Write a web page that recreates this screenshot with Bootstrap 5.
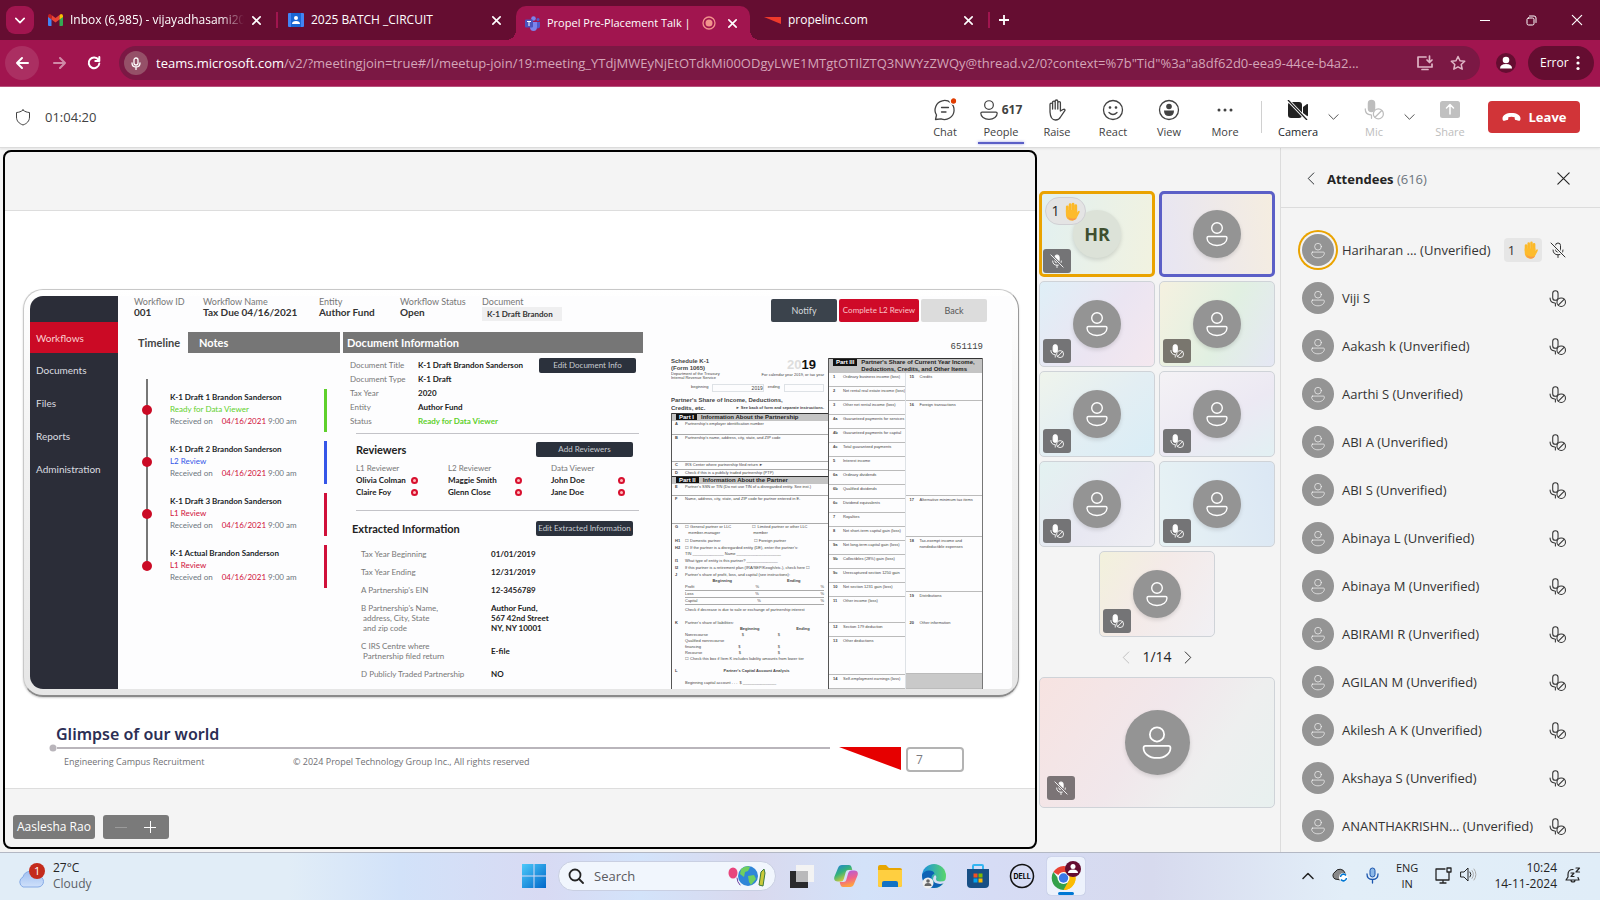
<!DOCTYPE html>
<html lang="en">
<head>
<meta charset="utf-8">
<meta name="viewport" content="width=device-width, initial-scale=1">
<title>Propel Pre-Placement Talk</title>
<link href="https://cdn.jsdelivr.net/npm/bootstrap@5.3.0/dist/css/bootstrap.min.css" rel="stylesheet">
<style>
:root{--ui:"Open Sans","Noto Sans",sans-serif;--slide:Lato,"Open Sans",sans-serif}
body{font-family:var(--ui);font-size:13px;line-height:20px;color:#242424;background:#f4f4f4}
button,input{font-family:inherit}
button{background:none;border:0;padding:0;color:inherit}
a{color:inherit;text-decoration:none}
svg{display:block;flex:none}
.ln{fill:none;stroke:currentColor;stroke-linecap:round;stroke-linejoin:round}
/* browser */
.tabstrip{background:#650d31;height:40px;color:#fff;padding-left:6px}
.tabsearch{width:28px;height:28px;border-radius:9px;background:#a1154f}
.btab{width:238px;height:34px;padding:0 14px 0 10px;gap:7px}
.btab .ttl{font-size:12px;white-space:nowrap;overflow:hidden}
.btab .fade-end{-webkit-mask-image:linear-gradient(90deg,#000 86%,transparent)}
.btab.on{width:234px;background:#a1154f;border-radius:10px 10px 0 0;padding:0 12px 0 9px;gap:7px;position:relative}
.btab.on .ttl{font-size:11px}
.btab.on::before,.btab.on::after{content:"";position:absolute;bottom:0;width:10px;height:10px}
.btab.on::before{left:-10px;background:radial-gradient(circle at 0 0,transparent 10px,#a1154f 10px)}
.btab.on::after{right:-10px;background:radial-gradient(circle at 100% 0,transparent 10px,#a1154f 10px)}
.tsep{width:2px;height:16px;background:#a1154f}
.wbtn{width:46px;height:40px}
.addr{background:#a1154f;height:47px;padding:0 6px 0 5px;border-bottom:1px solid #b8527c;color:#fff}
.rbtn{width:34px;height:34px;border-radius:50%}
.rbtn.hov{background:#ab2f62}
.omni{height:34px;border-radius:17px;background:#7b1844;padding:0 14px 0 5px}
.omni .mic{width:24px;height:24px;border-radius:50%;background:#955068}
.omni .tint{color:#dfb5c5}
.omni .url{font-size:13px;white-space:nowrap;overflow:hidden;text-overflow:ellipsis;color:#d4a5b8}
.omni .url b{font-weight:400;color:#fff}
.errpill{height:34px;border-radius:17px;background:#650d31;font-size:12px;padding:0 2px 0 12px;width:66px}
/* meeting bar */
.mbar{height:61px;background:#fff;border-bottom:1px solid #dcdcdc;box-shadow:0 1px 2px #0001;padding:0 20px 0 15px;color:#424242;position:relative}
.mbar .timer{margin-left:14px}
.tool{width:56px;height:60px;font-size:11px;line-height:14px;padding-top:10px;gap:3px;position:relative}
.tool .ic{height:25px}
.tool.sel::after{content:"";position:absolute;left:5px;right:5px;bottom:3px;height:2px;background:#5b5fc7;box-shadow:0 0 3px #5b5fc7aa}
.opts{padding:0 7px 0 2px}
.dim{color:#bdbdbd}
.leave{width:92px;height:32px;background:#d13438;border-radius:4px;color:#fff;font-weight:700;font-size:13px;margin-left:10px}
/* stage */
.stage{border:2px solid #000;border-radius:8px;margin:2px 2px 3px 3px;background:#f4f4f4;overflow:hidden;position:relative;min-width:0}
.pslide{background:#fff;border:solid #ddd;border-width:1px 0;height:579px;padding:78px 16px 0 18px;font-family:var(--slide)}
.device{height:408px;border-radius:20px;padding:6px;background:linear-gradient(#fff,#f2f2f2 40%,#e6e6e6);border:1px solid #c8c8c8;border-bottom:2px solid #8a8a8a;border-right-color:#999;box-shadow:0 1px 2px #0003}
.screen{border-radius:13px 4px 4px 13px;overflow:hidden;background:#fdfdfe;font-size:8px;line-height:12px;color:#222;height:100%;white-space:nowrap}
.side{width:88px;background:#2b2d38;color:#dcdde0;padding-top:26px;font-size:10px}
.side a{height:33px;padding-left:6px;display:flex;align-items:center}
.side a.cur{background:#cb0a25;color:#fbd0d0;height:31px}
.hd{height:36px;padding:0 25px 0 16px;color:#777;font-size:9px;line-height:11px}
.hd b{color:#333;font-size:10px;display:block;line-height:11px}
.hd .pick{font-size:8px;line-height:14px;width:80px;background:#efeff0;padding-left:5px}
.sbtn{background:#2b313c;color:#c9ccd2;border-radius:2px;font-size:8px;line-height:15px;height:15px;width:97px;text-align:center}
.hbtn{height:23px;width:66px;font-size:9px;border-radius:2px;text-align:center}
.gbar{background:#767676;color:#fff;height:21px;line-height:21px;font-weight:700;font-size:11px}
.tl{position:relative;padding:36px 0 0 36px}
.tl::before{content:"";position:absolute;left:12px;top:26px;height:188px;width:2px;background:#777}
.tl li{height:43px;margin-bottom:9px;width:157px;border-right:3px solid;padding-top:2px;position:relative;line-height:12px}
.tl li::before{content:"";position:absolute;left:-28px;top:16px;width:10px;height:10px;border-radius:50%;background:#cb0a25;border:0}
.tl li .when{margin-left:7px}
.g{color:#5fd02c}.bl{color:#3556e8}.r{color:#d0103a}
.info{display:grid;grid-template-columns:68px 1fr;margin:0;line-height:14px;color:#777}
.info dt{font-weight:400}.info dd{margin:0;font-weight:700;color:#222}
.info dd.g{color:#5fd02c}
.ext{grid-template-columns:130px 1fr;line-height:10px;row-gap:8px}
.sec{font-size:11px;line-height:15px;font-weight:700}
.rev{width:273px;table-layout:fixed;line-height:12px}
.rev th{font-weight:400;color:#777;padding:0}.rev td{padding:0;font-weight:700}
.xdot{display:block;width:7px;height:7px;border-radius:50%;border:2px solid #d8102f;background:#fbb}
.rule{height:1px;background:#c3c3c8}
/* tax form */
.k1{font-family:"Liberation Sans",sans-serif;font-size:4px;line-height:6px;color:#444;white-space:nowrap}
.k1 .left{width:158px;border-right:1px solid #555;overflow:hidden}
.k1 .left>*{flex-shrink:0}
.k1 .ln2{border-bottom:1px solid #aaa}
.k1 .part{background:#c4c4c4;border-top:1px solid #333;font-weight:700;font-size:6px;line-height:7px;color:#222}
.k1 .part span{background:#111;color:#fff;padding:0 3px;margin:0 4px 0 4px}
.k1 .q{padding-left:13px;position:relative;overflow:hidden}
.k1 .q i{position:absolute;left:3px;font-style:normal;font-weight:700}
.k1 .cell{border-bottom:1px solid #bbb;padding:1px 0 0 14px;flex:1 1 0;position:relative;overflow:hidden;min-height:0}
.k1 .cell i{position:absolute;left:4px;font-style:normal;font-weight:700}
.k1 .x2{flex-grow:2}.k1 .x3{flex-grow:3}.k1 .x4{flex-grow:4}.k1 .x7{flex-grow:7}
.foot{font-size:9px;color:#7b7b7f;font-family:"Open Sans",sans-serif;padding:27px 55px 0 29px}
.foot h1{font:600 16px/20px "Noto Sans",sans-serif;color:#2c2f55;margin:0}
.track{height:2px;background:#b9b5bb;width:773px}
.pageno{width:58px;height:25px;border:2px solid #b3b3b3;border-radius:4px;padding-left:8px;font-size:12px;line-height:21px}
.mt3{margin-top:3px}
.over{position:absolute;left:8px;bottom:8px}
.chip{background:#7a7a7a;color:#fff;border-radius:3px;height:24px;line-height:24px;font-size:12px}
/* gallery */
.gal{width:241px;padding:43px 5px 0 0;flex:none}
.pager{height:40px;font-size:14px;gap:12px}
.tile{width:116px;height:86px;border:1px solid #cfd3d8;border-radius:5px;position:relative}
.tile.hand{border:3px solid #eaa300}.tile.spk{border:3px solid #5b5fc7}
.ava{border-radius:50%;background:#949494;color:#fff;display:flex;align-items:center;justify-content:center;flex:none}
.tile .ava{width:48px;height:48px;box-shadow:0 2px 4px #0002}
.mute{position:absolute;left:3px;bottom:3px;width:28px;height:24px;background:#747476;color:#fff;border-radius:3px;display:flex;align-items:center;justify-content:center}
.tile.hand .mute{left:1px;bottom:1px}
.tile.me{width:236px;height:131px}.me .mute{left:7px;bottom:7px}.tile.me .ava{width:65px;height:65px}
.raised{position:absolute;left:3px;top:3px;width:41px;height:28px;border-radius:14px;background:#e4e4e4;border:1px solid #d0d0d4;font-size:14px}
/* attendees */
.panel{width:320px;border-left:1px solid #dcdcdc;flex:none}
.phead{height:60px;border-bottom:1px solid #dcdcdc;padding:2px 28px 0 26px}
.att{height:48px;padding:0 34px 0 21px;font-size:13px;gap:8px;color:#333}
.att .ava{width:32px;height:32px}
.att .ava.ring{box-shadow:0 0 0 2px #f4f4f4,0 0 0 4px #eaa300}
.cnt{background:#e6e6e6;border-radius:4px;height:24px;width:38px}
/* taskbar */
.tbar{height:48px;border-top:1px solid #b3b8c4;display:grid;grid-template-columns:1fr auto 1fr;align-items:center;background:linear-gradient(90deg,#e1edf7 0,#e1edf7 18%,#d2e2f9 25%,#d8daf3 34%,#d3e3fa 40%,#d9d9ee 47%,#d3e2f9 54%,#d6dcf5 62%,#d7daee 72%,#e2eef8 84%,#e0edf8)}
.tbar>*{margin-bottom:2px}
.srch{width:218px;height:30px;border-radius:15px;background:#f1f6fd;border:1px solid #c9cfe2;padding:0 9px;margin:0 4px 0 2px}
.srch input{border:0;background:none;outline:0;width:96px;font-size:13px;color:#555}
.srch input::placeholder{color:#5a5a5f;opacity:1}
.app{width:38px;height:38px;border-radius:4px;margin:0 3px;display:flex;align-items:center;justify-content:center;position:relative}
.app.act{background:#edf2fc;box-shadow:0 0 1px #8899bb}
.app.act::after{content:"";position:absolute;bottom:0;width:16px;height:3px;border-radius:2px;background:#0078d4}
.sm{font-size:11px;line-height:16px}
.md{font-size:12px;line-height:16px}
.tray{padding-right:19px;gap:17px}
</style>
</head>
<body>
<svg width="0" height="0" class="position-absolute" aria-hidden="true">
<symbol id="x" viewBox="0 0 12 12"><path class="ln" d="M2 2l8 8M10 2l-8 8"/></symbol>
<symbol id="person" viewBox="0 0 22 26"><g class="ln"><circle cx="11" cy="7" r="5.300"/><path d="M2.500 15.500h17q1.500 0 1.500 1.500c0 4-4 7.500-10 7.500S1 21 1 17q0-1.500 1.500-1.500z"/></g></symbol>
<symbol id="micoff" viewBox="0 0 16 16"><rect x="5.500" y="1" width="5" height="9" rx="2.500" fill="currentColor" fill-opacity="var(--f,1)" stroke="currentColor"/><path class="ln" d="M3 8c0 3 2 4.800 5 4.800S13 11 13 8M8 13v2.500"/><path d="M1 1l14 14" stroke="var(--bg,#747476)" stroke-width="3"/><path class="ln" d="M1 1l14 14"/></symbol>
<symbol id="micno" viewBox="0 0 16 16"><rect x="3.500" y="0.700" width="5" height="9" rx="2.500" fill="currentColor" fill-opacity="var(--f,1)" stroke="currentColor"/><path class="ln" d="M1 7.500c0 2.500 1.500 4.500 4.500 4.800M6 12.500v2.500"/><circle cx="11.500" cy="11.500" r="4" fill="var(--bg,#747476)" stroke="currentColor"/><path class="ln" d="M8.800 14.200l5.400-5.400"/></symbol>
<symbol id="palm" viewBox="0 0 20 24"><g fill="none" stroke="#fcb928" stroke-linecap="round" stroke-width="3.400"><path d="M4 13V6M7.600 12V3.200M11.300 12V2.500M14.800 12V4.500"/></g><path d="M2.300 10H16.500v3.500c1-1.800 2-2.800 2.900-2.200.7.500.3 1.600-.2 2.700L16 20c-1.200 2.300-3 3.500-6 3.500-4.500 0-7.700-3-7.700-8z" fill="#fdbb2c"/><path d="M4 18c1 3 3.500 5.500 7 5.300 2.500-.2 4-1.300 5-3.300-2 1.500-8 2-12-2z" fill="#f8984a"/></symbol>
<symbol id="down" viewBox="0 0 12 8"><path class="ln" d="M1 1.500l5 5 5-5"/></symbol>
<symbol id="left" viewBox="0 0 8 14"><path class="ln" d="M7 1L1 7l6 6"/></symbol>
</svg>

<div class="d-flex flex-column vh-100 overflow-hidden">
<header>
  <nav class="tabstrip d-flex align-items-center" aria-label="Tabs">
    <button class="tabsearch d-flex align-items-center justify-content-center" aria-label="Search tabs"><svg width="10" height="7" stroke-width="2"><use href="#down"/></svg></button>
    <div class="btab d-flex align-items-center ms-1"><svg width="15" height="12" viewBox="0 0 15 12"><path d="M0 2v9q0 1 1 1h2.500V4z" fill="#4285f4"/><path d="M15 2v9q0 1-1 1h-2.500V4z" fill="#34a853"/><path d="M3.500 1L7.500 4l4-3v4.500L7.500 8.500l-4-3z" fill="#ea4335"/><path d="M0 2Q0 0 2 0l1.500 1v4.500L0 3z" fill="#c5221f"/><path d="M15 2q0-2-2-2l-1.500 1v4.500L15 3z" fill="#fbbc04"/></svg><span class="ttl fade-end flex-grow-1">Inbox (6,985) - vijayadhasami20</span><button aria-label="Close tab"><svg width="11" height="11" stroke-width="1.800"><use href="#x"/></svg></button></div>
    <span class="tsep"></span>
    <div class="btab d-flex align-items-center"><svg width="16" height="14" viewBox="0 0 16 14"><rect width="16" height="14" rx="1" fill="#4285f4"/><rect x="3" width="10" height="14" fill="#1a66d2"/><circle cx="8" cy="5" r="2" fill="#fff"/><path d="M4 11q0-3 4-3t4 3z" fill="#fff"/></svg><span class="ttl flex-grow-1">2025 BATCH _CIRCUIT</span><button aria-label="Close tab"><svg width="11" height="11" stroke-width="1.800"><use href="#x"/></svg></button></div>
    <div class="btab on d-flex align-items-center align-self-end"><svg width="15" height="15" viewBox="0 0 15 15"><circle cx="8.500" cy="2.500" r="2.300" fill="#7b83eb"/><circle cx="13" cy="3.500" r="1.500" fill="#5059c9"/><path d="M11 6h4v4q0 2.500-3 2.500z" fill="#5059c9"/><path d="M5 6h7v5q0 4-3.500 4T5 11z" fill="#7b83eb"/><rect y="3.500" width="8" height="8" rx="1" fill="#4b53bc"/><path d="M2 5.500h4M4 5.500V10" stroke="#fff"/></svg><span class="ttl flex-grow-1">Propel Pre-Placement Talk |</span><svg width="14" height="14" viewBox="0 0 14 14"><circle cx="7" cy="7" r="6" fill="none" stroke="#f2938c" stroke-width="1.300"/><circle cx="7" cy="7" r="3.500" fill="#f2938c"/></svg><button class="ms-1" aria-label="Close tab"><svg width="11" height="11" stroke-width="1.800"><use href="#x"/></svg></button></div>
    <div class="btab d-flex align-items-center"><svg class="ms-1" width="17" height="7" viewBox="0 0 17 7"><path d="M0 0h17v7z" fill="#ee3a2b"/></svg><span class="ttl flex-grow-1">propelinc.com</span><button aria-label="Close tab"><svg width="11" height="11" stroke-width="1.800"><use href="#x"/></svg></button></div>
    <span class="tsep"></span>
    <button class="ms-1 p-1" aria-label="New tab"><svg width="12" height="12" viewBox="0 0 12 12" stroke="#fff" stroke-width="1.800"><path d="M6 1v10M1 6h10"/></svg></button>
    <div class="ms-auto d-flex">
      <button class="wbtn d-grid" aria-label="Minimize"><svg class="m-auto" width="10" height="10" stroke="#fff"><path d="M0 5.500h10"/></svg></button>
      <button class="wbtn d-grid" aria-label="Restore"><svg class="m-auto ln" width="11" height="11"><rect x="1" y="3" width="7" height="7" rx="1.500"/><path d="M3.500 1H8q2 0 2 2v4.500"/></svg></button>
      <button class="wbtn d-grid" aria-label="Close"><svg class="m-auto" width="14" height="14"><use href="#x"/></svg></button>
    </div>
  </nav>
  <div class="addr d-flex align-items-center">
    <button class="rbtn hov d-grid" aria-label="Back"><svg class="m-auto ln" width="14" height="14" stroke-width="2"><path d="M13 7H2M7 2L2 7l5 5"/></svg></button>
    <button class="rbtn d-grid ms-1 opacity-50" aria-label="Forward"><svg class="m-auto ln" width="14" height="14" stroke-width="2"><path d="M1 7h11M7 2l5 5-5 5"/></svg></button>
    <button class="rbtn d-grid" aria-label="Reload"><svg class="m-auto ln" width="14" height="14" stroke-width="2"><path d="M11.500 4A5.300 5.300 0 1 0 12.300 7.500M12.300 1v4H8.300"/></svg></button>
    <div class="omni d-flex align-items-center flex-grow-1 mx-2 overflow-hidden">
      <span class="mic d-grid flex-shrink-0"><svg class="m-auto ln" width="10" height="13" stroke-width="1.300"><rect x="3" y="1" width="4" height="7" rx="2"/><path d="M1 6q0 4 4 4t4-4M5 10v2.500"/></svg></span>
      <span class="url flex-grow-1 ms-2"><b>teams.microsoft.com</b>/v2/?meetingjoin=true#/l/meetup-join/19:meeting_YTdjMWEyNjEtOTdkMi00ODgyLWE1MTgtOTIlZTQ3NWYzZWQy@thread.v2/0?context=%7b"Tid"%3a"a8df62d0-eea9-44ce-b4a2...</span>
      <svg class="ln ms-3 tint" width="18" height="16" stroke-width="1.700"><path d="M10 2H2v10h14V9M6 14.500h6M13.500 1v6M11 5l2.500 2.500L16 5"/></svg>
      <svg class="ln ms-3 tint" width="16" height="16" stroke-width="1.500"><path d="M8 1.500l2 4.300 4.700.5-3.500 3.200 1 4.700L8 11.800l-4.200 2.400 1-4.700L1.300 6.300 6 5.800z"/></svg>
    </div>
    <svg class="mx-2" width="20" height="20"><circle cx="10" cy="10" r="10" fill="#650d31"/><circle cx="10" cy="7" r="3.300" fill="#fff"/><path d="M4 15.500q0-4.500 6-4.500t6 4.500z" fill="#fff"/></svg>
    <button class="errpill d-flex align-items-center ms-1">Error<svg class="ms-1" width="16" height="16" fill="#fff"><circle cx="5" cy="2.500" r="1.600"/><circle cx="5" cy="8" r="1.600"/><circle cx="5" cy="13.500" r="1.600"/></svg></button>
  </div>
</header>

<div class="mbar d-flex align-items-center">
  <svg class="ln" width="16" height="17"><path d="M8 1c2 1.800 4 2.300 6.500 2.500V8c0 4-2.500 6.500-6.500 8-4-1.500-6.500-4-6.500-8V3.500C4 3.300 6 2.800 8 1z"/></svg>
  <span class="timer">01:04:20</span>
  <div class="ms-auto d-flex align-items-center">
    <button class="tool d-flex flex-column align-items-center"><span class="ic d-grid"><svg class="m-auto ln" width="24" height="24" stroke-width="1.300"><path d="M2.500 21.500l1-4.500A9.500 9.500 0 1 1 8 20.800zM8.500 9.500h7M8.500 14h4.500"/><circle cx="20.500" cy="3" r="3.300" fill="#e03c00" stroke="#fff"/></svg></span>Chat</button>
    <button class="tool sel d-flex flex-column align-items-center"><span class="ic d-flex align-items-center gap-1 fw-bold md"><svg width="18" height="22" stroke-width="1.500"><use href="#person"/></svg>617</span>People</button>
    <button class="tool d-flex flex-column align-items-center"><span class="ic d-grid"><svg class="m-auto ln" width="18" height="22" stroke-width="1.300"><path d="M2 13V5.500q0-1.300 1.300-1.300T4.600 5.500V10V3.500q0-1.300 1.300-1.300t1.300 1.300V10V2.300Q7.200 1 8.500 1t1.300 1.300V10V4q0-1.300 1.300-1.300T12.400 4v8l2.600-1.500q2-.8 2 .8L12.500 18q-1.500 3-5 3-5 0-5.500-8z"/></svg></span>Raise</button>
    <button class="tool d-flex flex-column align-items-center"><span class="ic d-grid"><svg class="m-auto ln" width="22" height="22" stroke-width="1.300"><circle cx="11" cy="11" r="9.500"/><path d="M7 13.500q4 4 8 0"/><circle cx="8" cy="8.500" r=".7" fill="currentColor"/><circle cx="14" cy="8.500" r=".7" fill="currentColor"/></svg></span>React</button>
    <button class="tool d-flex flex-column align-items-center"><span class="ic d-grid"><svg class="m-auto" width="22" height="22"><circle class="ln" cx="11" cy="11" r="9.500" stroke-width="1.300"/><circle cx="11" cy="7.500" r="2.800" fill="currentColor"/><path d="M6 11.500h10q0 5.500-5 5.500t-5-5.500z" fill="currentColor"/></svg></span>View</button>
    <button class="tool d-flex flex-column align-items-center"><span class="ic d-grid"><svg class="m-auto" width="18" height="6" fill="currentColor"><circle cx="3" cy="3" r="1.500"/><circle cx="9" cy="3" r="1.500"/><circle cx="15" cy="3" r="1.500"/></svg></span>More</button>
    <span class="vr mx-2 my-auto" style="height:32px"></span>
    <button class="tool d-flex flex-column align-items-center text-dark"><span class="ic d-grid"><svg class="m-auto" width="22" height="20"><rect x="1" y="2" width="14" height="16" rx="3" fill="#222"/><path d="M16 7l4-3q1-.5 1 1v10q0 1.500-1 1l-4-3z" fill="#222"/><path d="M1 0l19 20" stroke="#fff" stroke-width="3"/><path d="M1 0l19 20" stroke="#222" stroke-width="1.300"/></svg></span>Camera</button>
    <button class="opts" aria-label="Camera options"><svg width="11" height="8"><use href="#down"/></svg></button>
    <button class="tool d-flex flex-column align-items-center dim" disabled><span class="ic d-grid"><svg class="m-auto" width="20" height="23" style="--bg:#fff"><use href="#micno"/></svg></span>Mic</button>
    <button class="opts" aria-label="Mic options"><svg width="11" height="8"><use href="#down"/></svg></button>
    <button class="tool d-flex flex-column align-items-center dim" disabled><span class="ic d-grid"><svg class="m-auto" width="20" height="17"><rect width="20" height="17" rx="2.500" fill="#c0c0c0"/><path class="ln text-white" d="M10 13V4M6.500 7L10 3.500 13.500 7" stroke-width="1.500"/></svg></span>Share</button>
    <button class="leave d-flex align-items-center justify-content-center gap-2"><svg width="19" height="10"><path d="M9.500 1c5 0 9 2 9 5.500 0 2-.8 2.500-2 2.200l-2.500-.6c-1-.3-1.300-.8-1.300-1.700V5.200c-2-.7-4.400-.7-6.400 0v1.200c0 .9-.3 1.400-1.300 1.700l-2.500.6C1.300 9 .5 8.500.5 6.500.5 3 4.500 1 9.500 1z" fill="#fff"/></svg>Leave</button>
  </div>
</div>

<main class="d-flex flex-grow-1 overflow-hidden">
  <section class="stage flex-grow-1 d-flex flex-column justify-content-center">
    <div class="pslide">
      <div class="device"><div class="screen d-flex">
        <nav class="side flex-shrink-0"><a href="#" class="cur">Workflows</a><a href="#">Documents</a><a href="#">Files</a><a href="#">Reports</a><a href="#">Administration</a></nav>
        <div class="flex-grow-1">
          <div class="hd d-flex">
            <div style="width:69px">Workflow ID<b>001</b></div><div style="width:116px">Workflow Name<b>Tax Due 04/16/2021</b></div><div style="width:81px">Entity<b>Author Fund</b></div><div style="width:82px">Workflow Status<b>Open</b></div><div>Document<b class="pick">K-1 Draft Brandon</b></div>
            <div class="ms-auto d-flex" style="gap:2px;padding-top:3px"><button class="hbtn" style="background:#3b434c;color:#d5d8db">Notify</button><button class="hbtn" style="background:#cf0a28;color:#fbc4c8;width:80px;font-size:8px">Complete L2 Review</button><button class="hbtn" style="background:#dcdcdc;color:#555">Back</button></div>
          </div>
          <div class="d-flex" style="padding-left:16px">
            <div style="width:206px">
              <div class="d-flex"><span class="fw-bold ps-1" style="width:54px;font-size:11px;line-height:21px;color:#444">Timeline</span><span class="gbar flex-grow-1" style="padding-left:11px">Notes</span></div>
              <ul class="tl list-unstyled m-0">
                <li class="g"><b class="text-dark">K-1 Draft 1 Brandon Sanderson</b><br>Ready for Data Viewer<br><span class="text-secondary">Received on <span class="r when">04/16/2021</span> 9:00 am</span></li>
                <li class="bl"><b class="text-dark">K-1 Draft 2 Brandon Sanderson</b><br>L2 Review<br><span class="text-secondary">Received on <span class="r when">04/16/2021</span> 9:00 am</span></li>
                <li class="r"><b class="text-dark">K-1 Draft 3 Brandon Sanderson</b><br>L1 Review<br><span class="text-secondary">Received on <span class="r when">04/16/2021</span> 9:00 am</span></li>
                <li class="r"><b class="text-dark">K-1 Actual Brandon Sanderson</b><br>L1 Review<br><span class="text-secondary">Received on <span class="r when">04/16/2021</span> 9:00 am</span></li>
              </ul>
            </div>
            <div style="width:300px;margin-left:3px">
              <div class="gbar ps-1">Document Information</div>
              <div class="d-flex justify-content-between align-items-start" style="padding:5px 7px 5px 7px">
                <dl class="info"><dt>Document Title</dt><dd>K-1 Draft Brandon Sanderson</dd><dt>Document Type</dt><dd>K-1 Draft</dd><dt>Tax Year</dt><dd>2020</dd><dt>Entity</dt><dd>Author Fund</dd><dt>Status</dt><dd class="g">Ready for Data Viewer</dd></dl>
                <button class="sbtn">Edit Document Info</button>
              </div>
              <div style="padding:0 4px 0 13px"><div class="rule"></div>
                <div class="d-flex justify-content-between" style="padding:8px 6px 5px 0"><span class="sec">Reviewers</span><button class="sbtn">Add Reviewers</button></div>
                <table class="rev"><colgroup><col style="width:55px"><col style="width:37px"><col style="width:67px"><col style="width:36px"><col style="width:67px"><col></colgroup><thead><tr><th colspan="2">L1 Reviewer</th><th colspan="2">L2 Reviewer</th><th colspan="2">Data Viewer</th></tr></thead><tbody>
                <tr><td>Olivia Colman</td><td><span class="xdot"></span></td><td>Maggie Smith</td><td><span class="xdot"></span></td><td>John Doe</td><td><span class="xdot"></span></td></tr>
                <tr><td>Claire Foy</td><td><span class="xdot"></span></td><td>Glenn Close</td><td><span class="xdot"></span></td><td>Jane Doe</td><td><span class="xdot"></span></td></tr></tbody></table>
                <div class="rule" style="margin-top:12px"></div></div>
              <div class="d-flex justify-content-between" style="padding:10px 10px 13px 9px"><span class="sec">Extracted Information</span><button class="sbtn">Edit Extracted Information</button></div>
              <dl class="info ext" style="padding-left:18px"><dt>Tax Year Beginning</dt><dd>01/01/2019</dd><dt>Tax Year Ending</dt><dd>12/31/2019</dd><dt>A Partnership's EIN</dt><dd>12-3456789</dd><dt>B Partnership's Name,<br>&nbsp;address, City, State<br>&nbsp;and zip code</dt><dd>Author Fund,<br>567 42nd Street<br>NY, NY 10001</dd><dt>C IRS Centre where<br>&nbsp;Partnership filed return</dt><dd class="align-self-center">E-file</dd><dt>D Publicly Traded Partnership</dt><dd>NO</dd></dl>
            </div>
            <div class="k1" style="width:312px;margin-left:28px;padding-top:10px">
              <div class="text-end" style="font:9px/10px 'Liberation Mono',monospace">651119</div>
              <div class="d-flex" style="height:331px;margin-top:6px">
                <div class="left d-flex flex-column flex-shrink-0">
                  <div class="d-flex justify-content-between" style="height:22px"><div style="font-size:6px;line-height:7px"><b>Schedule K-1<br>(Form 1065)</b><div style="font-size:4px;line-height:4px">Department of the Treasury<br>Internal Revenue Service</div></div><div class="text-end pe-1"><b style="font-size:13px;line-height:14px;color:#111;padding-right:8px"><span style="color:#ddd">20</span>19</b><br>For calendar year 2019, or tax year</div></div>
                  <div class="d-flex gap-1 pe-1" style="height:12px;padding:4px 0 0 20px">beginning <span class="border flex-grow-1 text-end" style="font-size:5px">2019</span> ending <span class="border flex-grow-1"></span></div>
                  <div style="font-size:6px;line-height:8px;height:21px;padding-top:4px"><b>Partner's Share of Income, Deductions,<br>Credits, etc.</b> <b class="float-end pe-1" style="font-size:4px">► See back of form and separate instructions.</b></div>
                  <div style="border-left:1px solid #555" class="flex-grow-1">
                  <div class="part"><span>Part I</span>Information About the Partnership</div>
                  <div class="q ln2" style="height:14px"><i>A</i>Partnership's employer identification number</div>
                  <div class="q ln2" style="height:27px"><i>B</i>Partnership's name, address, city, state, and ZIP code</div>
                  <div class="q ln2" style="height:8px"><i>C</i>IRS Center where partnership filed return ►</div>
                  <div class="q" style="height:6px"><i>D</i>Check if this is a publicly traded partnership (PTP)</div>
                  <div class="part"><span>Part II</span>Information About the Partner</div>
                  <div class="q ln2" style="height:12px"><i>E</i>Partner's SSN or TIN (Do not use TIN of a disregarded entity. See inst.)</div>
                  <div class="q ln2" style="height:28px"><i>F</i>Name, address, city, state, and ZIP code for partner entered in E.</div>
                  <div class="q" style="height:14px"><i>G</i>☐ General partner or LLC <span style="padding-left:20px">☐ Limited partner or other LLC</span><br>&nbsp;&nbsp; member-manager <span style="padding-left:32px">member</span></div>
                  <div class="q" style="height:7px"><i>H1</i>☐ Domestic partner <span style="padding-left:32px">☐ Foreign partner</span></div>
                  <div class="q" style="height:13px"><i>H2</i>☐ If the partner is a disregarded entity (DE), enter the partner's:<br>TIN ______________ Name ____________________</div>
                  <div class="q" style="height:7px"><i>I1</i>What type of entity is this partner? ______________</div>
                  <div class="q" style="height:7px"><i>I2</i>If this partner is a retirement plan (IRA/SEP/Keogh/etc.), check here ☐</div>
                  <div class="q" style="height:35px"><i>J</i>Partner's share of profit, loss, and capital (see instructions):<b class="d-flex justify-content-around">
                    <span>Beginning</span><span>Ending</span></b>
                    <div class="d-flex justify-content-between ln2 me-1"><span>Profit</span><span>%</span><span>%</span></div><div class="d-flex justify-content-between ln2 me-1"><span>Loss</span><span>%</span><span>%</span></div><div class="d-flex justify-content-between ln2 me-1"><span>Capital</span><span>%</span><span>%</span></div></div>
                  <div class="q" style="height:13px">Check if decrease is due to sale or exchange of partnership interest</div>
                  <div class="q" style="height:48px"><i>K</i>Partner's share of liabilities:<b class="d-flex justify-content-around"><span></span><span>Beginning</span><span>Ending</span></b>
                    <div class="d-flex justify-content-between pe-5"><span>Nonrecourse</span><span>$</span><span>$</span></div><div>Qualified nonrecourse</div><div class="d-flex justify-content-between pe-5"><span>financing</span><span>$</span><span>$</span></div><div class="d-flex justify-content-between pe-5"><span>Recourse</span><span>$</span><span>$</span></div>☐ Check this box if Item K includes liability amounts from lower tier</div>
                  <div class="q"><i>L</i><b class="d-block text-center">Partner's Capital Account Analysis</b></div>
                  <div class="q" style="padding-top:6px">Beginning capital account . . . &nbsp;$ _______________</div>
                  </div>
                </div>
                <div class="flex-grow-1 d-flex flex-column" style="border-right:1px solid #777">
                  <div class="part d-flex flex-shrink-0" style="height:15px"><span class="align-self-start">Part III</span><div>Partner's Share of Current Year Income,<br>Deductions, Credits, and Other Items</div></div>
                  <div class="d-flex flex-grow-1">
                    <div class="d-flex flex-column w-50 border-end">
                      <div class="cell"><i>1</i>Ordinary business income (loss)</div><div class="cell"><i>2</i>Net rental real estate income (loss)</div><div class="cell"><i>3</i>Other net rental income (loss)</div><div class="cell"><i>4a</i>Guaranteed payments for services</div><div class="cell"><i>4b</i>Guaranteed payments for capital</div><div class="cell"><i>4c</i>Total guaranteed payments</div><div class="cell"><i>5</i>Interest income</div><div class="cell"><i>6a</i>Ordinary dividends</div><div class="cell"><i>6b</i>Qualified dividends</div><div class="cell"><i>6c</i>Dividend equivalents</div><div class="cell"><i>7</i>Royalties</div><div class="cell"><i>8</i>Net short-term capital gain (loss)</div><div class="cell"><i>9a</i>Net long-term capital gain (loss)</div><div class="cell"><i>9b</i>Collectibles (28%) gain (loss)</div><div class="cell"><i>9c</i>Unrecaptured section 1250 gain</div><div class="cell"><i>10</i>Net section 1231 gain (loss)</div><div class="cell x2"><i>11</i>Other income (loss)</div><div class="cell"><i>12</i>Section 179 deduction</div><div class="cell x3"><i>13</i>Other deductions</div><div class="cell"><i>14</i>Self-employment earnings (loss)</div>
                    </div>
                    <div class="d-flex flex-column w-50">
                      <div class="cell x2"><i>15</i>Credits</div><div class="cell x7"><i>16</i>Foreign transactions</div><div class="cell x3"><i>17</i>Alternative minimum tax items</div><div class="cell x4"><i>18</i>Tax-exempt income and<br>nondeductible expenses</div><div class="cell x2 border-0"><i>19</i>Distributions</div><div class="cell x4"><i>20</i>Other information</div><div class="cell" style="background:#c9c9c9"></div>
                    </div>
                  </div>
                </div>
              </div>
            </div>
          </div>
        </div>
      </div></div>
      <div class="foot">
        <h1 class="ps-1">Glimpse of our world</h1>
        <div class="d-flex">
          <div class="flex-grow-1"><div class="d-flex align-items-center" style="margin-left:-3px"><svg width="8" height="8"><circle cx="4" cy="4" r="3.500" fill="#b9b5bb"/></svg><div class="track"></div></div>
          <div class="d-flex ps-2 ms-1" style="color:#707074"><span style="width:229px">Engineering Campus Recruitment</span><span>© 2024 Propel Technology Group Inc., All rights reserved</span></div></div>
          <svg width="63" height="24" class="mt3"><path d="M0 0h62v23z" fill="#e60000"/></svg>
          <div class="pageno ms-1 mt3">7</div>
        </div>
      </div>
    </div>
    <div class="over d-flex gap-2"><span class="chip px-1">Aaslesha Rao</span><span class="chip d-flex align-items-center justify-content-around px-1" style="width:66px"><button class="opacity-25" aria-label="Zoom out"><svg width="12" height="12" stroke="#fff"><path d="M0 6.500h12"/></svg></button><button aria-label="Zoom in"><svg width="12" height="12" stroke="#fff"><path d="M0 6.500h12M6.500 0v12"/></svg></button></span></div>
  </section>

  <section class="gal">
    <div class="d-flex flex-wrap justify-content-center gap-1">
      <div class="tile hand d-grid" style="background:linear-gradient(100deg,#e2f0f0,#f1f2e0)"><span class="ava m-auto fw-bold" style="background:#dce2d8;color:#3f4f30;font-size:18px">HR</span><span class="raised d-flex align-items-center justify-content-center gap-1">1<svg width="16" height="19"><use href="#palm"/></svg></span><span class="mute"><svg width="14" height="14"><use href="#micoff"/></svg></span></div>
      <div class="tile spk d-grid" style="background:linear-gradient(80deg,#e7e5f3,#f5ede0)"><span class="ava m-auto"><svg width="22" height="26" stroke-width="1.400"><use href="#person"/></svg></span></div>
      <div class="tile d-grid" style="background:linear-gradient(125deg,#dfeff7,#ebe5f2 55%,#f4e8ef)"><span class="ava m-auto"><svg width="22" height="26" stroke-width="1.400"><use href="#person"/></svg></span><span class="mute"><svg width="14" height="14"><use href="#micno"/></svg></span></div>
      <div class="tile d-grid" style="background:linear-gradient(115deg,#f5f1e0,#e1f0e2 55%,#e5e7f4)"><span class="ava m-auto"><svg width="22" height="26" stroke-width="1.400"><use href="#person"/></svg></span><span class="mute" style="background:#79766e"><svg width="14" height="14" style="--bg:#79766e"><use href="#micno"/></svg></span></div>
      <div class="tile d-grid" style="background:linear-gradient(140deg,#eff4ec,#e3eef3 50%,#d9edf6)"><span class="ava m-auto"><svg width="22" height="26" stroke-width="1.400"><use href="#person"/></svg></span><span class="mute"><svg width="14" height="14"><use href="#micno"/></svg></span></div>
      <div class="tile d-grid" style="background:linear-gradient(150deg,#f4f2f5,#ece9f3 55%,#e2f0f3)"><span class="ava m-auto"><svg width="22" height="26" stroke-width="1.400"><use href="#person"/></svg></span><span class="mute"><svg width="14" height="14"><use href="#micno"/></svg></span></div>
      <div class="tile d-grid" style="background:linear-gradient(130deg,#e3f2f1,#e8e8f2 55%,#eeeef3)"><span class="ava m-auto"><svg width="22" height="26" stroke-width="1.400"><use href="#person"/></svg></span><span class="mute"><svg width="14" height="14"><use href="#micno"/></svg></span></div>
      <div class="tile d-grid" style="background:linear-gradient(80deg,#e7f2f4,#dbe7f4)"><span class="ava m-auto"><svg width="22" height="26" stroke-width="1.400"><use href="#person"/></svg></span><span class="mute"><svg width="14" height="14"><use href="#micno"/></svg></span></div>
      <div class="tile d-grid" style="background:linear-gradient(120deg,#f2f1dc,#f4eae8 45%,#f1f0f4)"><span class="ava m-auto"><svg width="22" height="26" stroke-width="1.400"><use href="#person"/></svg></span><span class="mute"><svg width="14" height="14"><use href="#micno"/></svg></span></div>
    </div>
    <div class="pager d-flex align-items-center justify-content-center"><button class="dim" aria-label="Previous page"><svg width="8" height="13"><use href="#left"/></svg></button>1/14<button aria-label="Next page"><svg width="8" height="13" class="ln" viewBox="0 0 8 14"><path d="M1 1l6 6-6 6"/></svg></button></div>
    <div class="tile me d-grid ms-0" style="background:linear-gradient(125deg,#f7e3e1,#f1e7eb 45%,#eeefef 70%,#e8f0ef)"><span class="ava m-auto"><svg width="30" height="35" stroke-width="1.300"><use href="#person"/></svg></span><span class="mute" style="background:#7b7476"><svg width="14" height="14" style="--bg:#7b7476"><use href="#micoff"/></svg></span></div>
  </section>

  <aside class="panel">
    <div class="phead d-flex align-items-center"><button aria-label="Back"><svg width="8" height="13" class="text-dark"><use href="#left"/></svg></button><span class="ms-2 ps-1"><b class="fw-bold">Attendees</b> <span class="text-secondary">(616)</span></span><button class="ms-auto" aria-label="Close"><svg width="17" height="17" stroke-width=".8"><use href="#x"/></svg></button></div>
    <ul class="list-unstyled m-0" style="padding-top:18px;--bg:#f4f4f4;--f:0">
      <li class="att d-flex align-items-center"><span class="ava ring"><svg width="14" height="17"><use href="#person"/></svg></span>Hariharan ... (Unverified)<span class="cnt ms-auto d-flex align-items-center justify-content-center gap-2">1<svg width="15" height="18"><use href="#palm"/></svg></span><svg width="16" height="16"><use href="#micoff"/></svg></li>
      <li class="att d-flex align-items-center"><span class="ava"><svg width="14" height="17"><use href="#person"/></svg></span>Viji S<svg class="ms-auto" width="17" height="17"><use href="#micno"/></svg></li>
      <li class="att d-flex align-items-center"><span class="ava"><svg width="14" height="17"><use href="#person"/></svg></span>Aakash k (Unverified)<svg class="ms-auto" width="17" height="17"><use href="#micno"/></svg></li>
      <li class="att d-flex align-items-center"><span class="ava"><svg width="14" height="17"><use href="#person"/></svg></span>Aarthi S (Unverified)<svg class="ms-auto" width="17" height="17"><use href="#micno"/></svg></li>
      <li class="att d-flex align-items-center"><span class="ava"><svg width="14" height="17"><use href="#person"/></svg></span>ABI A (Unverified)<svg class="ms-auto" width="17" height="17"><use href="#micno"/></svg></li>
      <li class="att d-flex align-items-center"><span class="ava"><svg width="14" height="17"><use href="#person"/></svg></span>ABI S (Unverified)<svg class="ms-auto" width="17" height="17"><use href="#micno"/></svg></li>
      <li class="att d-flex align-items-center"><span class="ava"><svg width="14" height="17"><use href="#person"/></svg></span>Abinaya L (Unverified)<svg class="ms-auto" width="17" height="17"><use href="#micno"/></svg></li>
      <li class="att d-flex align-items-center"><span class="ava"><svg width="14" height="17"><use href="#person"/></svg></span>Abinaya M (Unverified)<svg class="ms-auto" width="17" height="17"><use href="#micno"/></svg></li>
      <li class="att d-flex align-items-center"><span class="ava"><svg width="14" height="17"><use href="#person"/></svg></span>ABIRAMI R (Unverified)<svg class="ms-auto" width="17" height="17"><use href="#micno"/></svg></li>
      <li class="att d-flex align-items-center"><span class="ava"><svg width="14" height="17"><use href="#person"/></svg></span>AGILAN M (Unverified)<svg class="ms-auto" width="17" height="17"><use href="#micno"/></svg></li>
      <li class="att d-flex align-items-center"><span class="ava"><svg width="14" height="17"><use href="#person"/></svg></span>Akilesh A K (Unverified)<svg class="ms-auto" width="17" height="17"><use href="#micno"/></svg></li>
      <li class="att d-flex align-items-center"><span class="ava"><svg width="14" height="17"><use href="#person"/></svg></span>Akshaya S (Unverified)<svg class="ms-auto" width="17" height="17"><use href="#micno"/></svg></li>
      <li class="att d-flex align-items-center"><span class="ava"><svg width="14" height="17"><use href="#person"/></svg></span><span class="text-nowrap">ANANTHAKRISHN... (Unverified)</span><svg class="ms-auto" width="17" height="17"><use href="#micno"/></svg></li>
    </ul>
  </aside>
</main>

<footer class="tbar flex-shrink-0">
  <div class="d-flex align-items-center" style="padding-left:17px">
    <svg width="28" height="26" viewBox="0 0 28 26"><defs><linearGradient id="cl" x2="0" y2="1"><stop stop-color="#9fc0f2"/><stop offset="1" stop-color="#cfe0fa"/></linearGradient></defs><path d="M6 24a5.500 5.500 0 0 1 0-10 8 8 0 0 1 15-1 5.500 5.500 0 0 1 0 11z" fill="url(#cl)" stroke="#86abe6"/><circle cx="20" cy="8" r="8" fill="#c42b1c"/><text x="17" y="12" font-size="11" fill="#fff">1</text></svg>
    <div class="md ms-1 ps-1">27°C<br><span style="color:#5b5f66">Cloudy</span></div>
  </div>
  <div class="d-flex align-items-center">
    <button class="app" aria-label="Start"><svg width="24" height="24"><defs><linearGradient id="wn" x2="1" y2="1"><stop stop-color="#4cc9fa"/><stop offset="1" stop-color="#0067c9"/></linearGradient></defs><path d="M0 0h11.500v11.500H0zM12.500 0H24v11.500H12.500zM0 12.500h11.500V24H0zM12.500 12.500H24V24H12.500z" fill="url(#wn)"/></svg></button>
    <div class="srch d-flex align-items-center"><svg class="ln" width="16" height="16" stroke-width="1.800"><circle cx="7" cy="7" r="5.500"/><path d="M11 11l4 4"/></svg><input class="ms-2" placeholder="Search" aria-label="Search">
      <svg class="ms-auto" width="38" height="24"><path d="M9 14q0 4 3 7" class="ln" style="color:#6a3fa0"/><ellipse cx="5" cy="9" rx="4.500" ry="5.500" fill="#e8457d"/><circle cx="20" cy="12" r="10" fill="#2f86d8"/><path d="M13 5q5-4 9-2l-2 4-3 1-1 5-4-3zM20 12l6-1 2 4-5 6-2-3z" fill="#6fcf5f"/><path d="M31 21l2-13 3-3 1 4-2 13z" fill="#c9c93a" stroke="#3d7a3d"/></svg></div>
    <button class="app" aria-label="Task view"><svg width="24" height="24"><path d="M0 7h18v17H0z" fill="#2a2a2c"/><path d="M6 1h18v17H6z" fill="#f3f3f3"/><path d="M6 7h12v11H6z" fill="#b9b9bb"/></svg></button>
    <button class="app" aria-label="Copilot"><svg width="24" height="24"><defs><linearGradient id="c1" x2=".6" y2="1"><stop stop-color="#1f7de0"/><stop offset=".5" stop-color="#34b27b"/><stop offset="1" stop-color="#f3d02b"/></linearGradient><linearGradient id="c2" x2=".3" y2="1"><stop stop-color="#a35cf0"/><stop offset=".6" stop-color="#f0628a"/><stop offset="1" stop-color="#ffa23f"/></linearGradient></defs><path d="M8 1h7q2 0 2.500 2l.8 3h-4q-2 0-2.500 2l-2 7q-.8 2.500-3 2.500H4q-5 0-3.500-5L4 4q1-3 4-3z" fill="url(#c1)"/><path d="M16 23H9q-2 0-2.500-2l-.8-3h4q2 0 2.500-2l2-7q.8-2.500 3-2.500H20q5 0 3.500 5L20 20q-1 3-4 3z" fill="url(#c2)"/></svg></button>
    <button class="app" aria-label="File Explorer"><svg width="24" height="23"><path d="M0 3q0-2 2-2h6l3 3h11q2 0 2 2v15q0 2-2 2H2q-2 0-2-2z" fill="#e8a600"/><path d="M0 6h24v15q0 2-2 2H2q-2 0-2-2z" fill="#ffcf40"/><path d="M4 23v-4q0-2 2-2h12q2 0 2 2v4z" fill="#1272c4"/></svg></button>
    <button class="app" aria-label="Edge"><svg width="26" height="26"><defs><linearGradient id="ed" x2="1"><stop stop-color="#1b8fe0"/><stop offset="1" stop-color="#58d66a"/></linearGradient></defs><circle cx="13" cy="13" r="12" fill="url(#ed)"/><path d="M1 12q2-4.500 7-4.500 4.500 0 5.500 3Q10 12 10.500 15.500 11.500 20 17 20q4 0 6.500-2Q20 25 13 25 2 25 1 12z" fill="#0d62b5"/><path d="M14 12q2 1 1 4 0 2.500 4 2.500 3.500 0 6-1.500l1 3-7 1q-6-.5-7-4.500 0-3 2-4.500z" fill="#d6dcf5"/><circle cx="7" cy="20" r="5.500" fill="#eee"/><circle cx="7" cy="18" r="1.800" fill="#666"/><path d="M3.500 23q0-3 3.500-3t3.500 3z" fill="#666"/></svg></button>
    <button class="app" aria-label="Store"><svg width="24" height="26"><path d="M7 6V3q0-1 1-1h8q1 0 1 1v3" fill="none" stroke="#35b5f1" stroke-width="2"/><path d="M1 6h22v15q0 4-4 4H5q-4 0-4-4z" fill="#174f85"/><path d="M7.500 10.500h4v4h-4z" fill="#f25022"/><path d="M12.500 10.500h4v4h-4z" fill="#7fba00"/><path d="M7.500 15.500h4v4h-4z" fill="#00a4ef"/><path d="M12.500 15.500h4v4h-4z" fill="#ffb900"/></svg></button>
    <button class="app" aria-label="Dell"><svg width="26" height="26"><circle cx="13" cy="13" r="11.500" fill="none" stroke="#111" stroke-width="1.500"/><text x="13" y="16" text-anchor="middle" font-size="7" font-weight="700" font-family="Inter, sans-serif">DELL</text></svg></button>
    <button class="app act" aria-label="Chrome"><svg width="30" height="30" viewBox="0 0 30 30"><path d="M12.500 17L2.300 11a12 12 0 0 1 20.700 0z" fill="#ea4335"/><path d="M12.500 17H24.500A12 12 0 0 1 12 29z" fill="#fbbc04"/><path d="M23 11a12 12 0 0 1-10.500 18l6-9-6-9z" fill="#fbbc04"/><path d="M2.300 11A12 12 0 0 0 12.500 29l5-9-9-1z" fill="#34a04a"/><circle cx="12.500" cy="17" r="6" fill="#fff"/><circle cx="12.500" cy="17" r="4.700" fill="#3b78e7"/><circle cx="22" cy="8" r="8" fill="#650d31"/><circle cx="22" cy="5.500" r="2.500" fill="#fff"/><path d="M17 12q0-3.500 5-3.500t5 3.500z" fill="#fff"/></svg></button>
  </div>
  <div class="tray d-flex align-items-center justify-content-end">
    <svg width="12" height="8"><path class="ln" d="M1 6.500l5-5 5 5" stroke-width="1.500"/></svg>
    <svg width="18" height="15"><path d="M4 11a4 4 0 0 1 0-7 5.500 5.500 0 0 1 10 1l2 4-6 3z" fill="#888" stroke="#222"/><circle cx="12.500" cy="9.500" r="4.500" fill="#fff"/><path d="M9.500 9a3 3 0 0 1 5.500-1.500M15.500 10a3 3 0 0 1-5.500 1.500" fill="none" stroke="#0078d4" stroke-width="1.500"/></svg>
    <svg style="color:#1a55ad" width="13" height="17"><path class="ln" stroke-width="1.300" d="M1 7q0 5.500 5.500 5.500T12 7M6.500 12.500V16"/><rect x="4" y="1" width="5" height="9" rx="2.500" fill="#8cb8e8" stroke="currentColor"/></svg>
    <div class="sm text-center">ENG<br>IN</div>
    <div class="d-flex gap-2"><svg class="ln" width="17" height="17" stroke-width="1.300"><path d="M10 2H1v11h13V9M5 16h6M8 13v3M12 1h4v4h-4zM14 5v4"/></svg>
    <svg width="17" height="15"><path class="ln" d="M1 5h3l4-4v13L4 10H1zM10 5q2 2.500 0 5"/><path class="ln" style="color:#aaa" d="M12 3.500q3 4 0 8M14 2q4 5.500 0 11"/></svg></div>
    <div class="d-flex align-items-center gap-2"><div class="md text-end">10:24<br>14-11-2024</div>
    <svg width="16" height="17"><path class="ln" d="M8 2.500C4 2.500 3 5 3 7.500V10l-2 3h13l-1-2.500M6 13q0 2 2 2t2-2M6 6h3L6 9.500h3M11 1h3.500L11 5h3.500" stroke-width="1.200"/></svg></div>
  </div>
</footer>
</div>
<script src="https://cdn.jsdelivr.net/npm/bootstrap@5.3.0/dist/js/bootstrap.bundle.min.js"></script>
</body>
</html>
